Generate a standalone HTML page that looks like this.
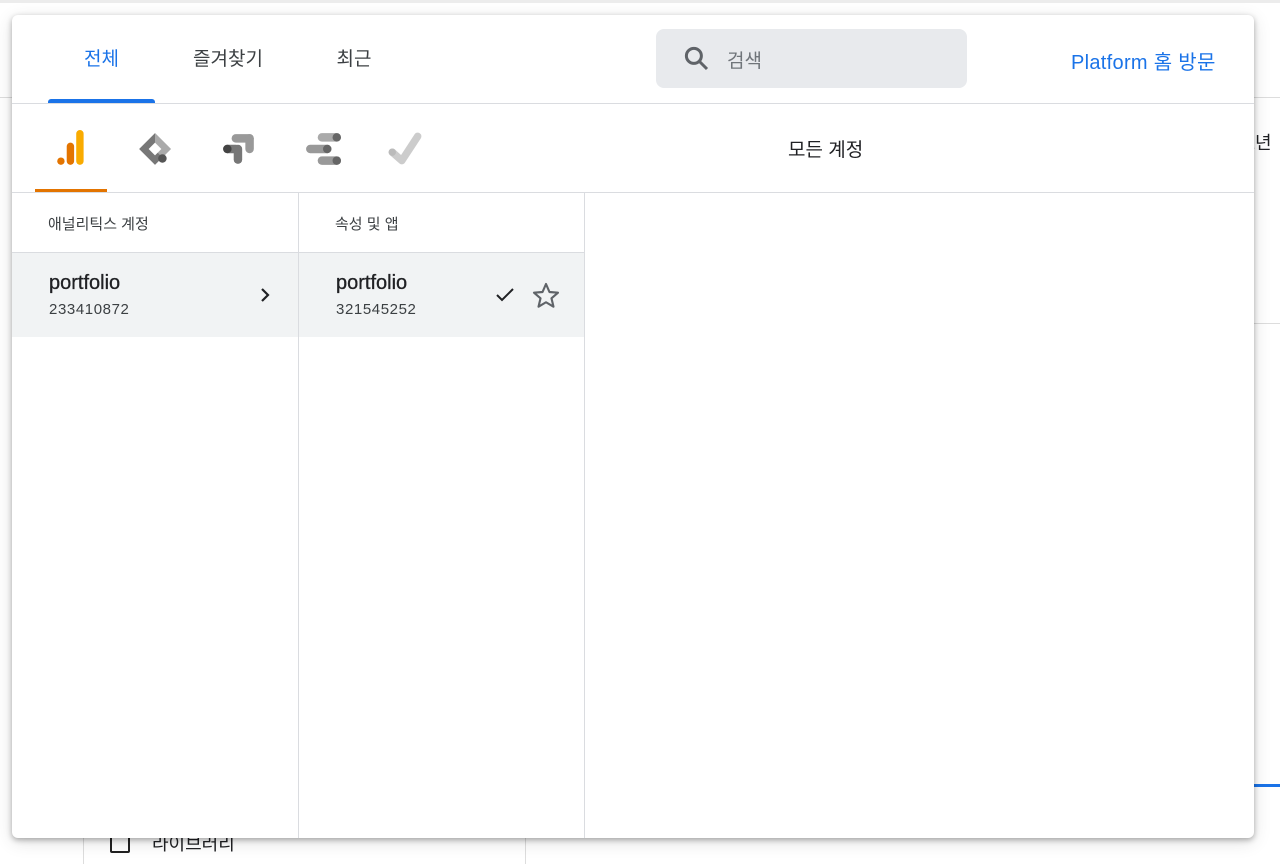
<!DOCTYPE html>
<html><head><meta charset="utf-8"><style>
*{box-sizing:border-box;margin:0;padding:0}
body{width:1280px;height:864px;overflow:hidden;background:#fff;position:relative;font-family:"Liberation Sans","Noto Sans CJK KR",sans-serif;color:#202124}
.bg{position:absolute}
.modal{position:absolute;left:12px;top:15px;width:1242px;height:823px;background:#fff;border-radius:6px;box-shadow:0 2px 6px rgba(0,0,0,.3),0 4px 18px rgba(0,0,0,.12);overflow:hidden}
.tab{position:absolute;top:0;height:88px;line-height:90px;font-size:19px;color:#3c4043;text-align:center}
.sel{color:#1a73e8}
.line{position:absolute;background:#dadce0}
.t{position:absolute;white-space:nowrap}
</style></head><body>
<div class="bg" style="left:0;top:0;width:1280px;height:3px;background:#ececec"></div>
<div class="bg" style="left:0;top:97px;width:1280px;height:1px;background:#ddd"></div>
<div class="bg" style="left:1240px;top:323px;width:40px;height:1px;background:#ddd"></div>
<div class="bg" style="left:1240px;top:784px;width:40px;height:3px;background:#1a73e8"></div>
<div class="bg" style="left:83px;top:838px;width:1px;height:26px;background:#ddd"></div>
<div class="bg" style="left:525px;top:838px;width:1px;height:26px;background:#ddd"></div>
<div class="bg" style="left:110px;top:833px;width:20px;height:20px;border:2px solid #222;border-radius:2px"></div>
<div class="t" style="left:152px;top:830px;font-size:18px">라이브러리</div>
<div class="t" style="left:1245px;top:129px;font-size:18px">2년</div>

<div class="modal">
 <div class="tab sel" style="left:36px;width:107px">전체</div>
 <div style="position:absolute;left:36px;top:84px;width:107px;height:4px;background:#1a73e8;border-radius:3px 3px 0 0"></div>
 <div class="tab" style="left:170px;width:92px">즐겨찾기</div>
 <div class="tab" style="left:300px;width:84px">최근</div>
 <div style="position:absolute;left:644px;top:14px;width:311px;height:59px;background:#e8eaed;border-radius:8px">
  <svg style="position:absolute;left:26px;top:15px" width="30" height="30" viewBox="0 0 24 24"><circle cx="9.5" cy="9.5" r="6" fill="none" stroke="#5f6368" stroke-width="2.4"/><path d="M14 14l6 6" stroke="#5f6368" stroke-width="2.4"/></svg>
  <div class="t" style="left:71px;top:17px;font-size:19px;color:#70757a">검색</div>
 </div>
 <div class="t" style="left:1059px;top:31px;font-size:20px;color:#1a73e8;letter-spacing:.3px">Platform 홈 방문</div>
 <div class="line" style="left:0;top:88px;width:1242px;height:1px"></div>
 <svg style="position:absolute;left:42px;top:115px" width="36" height="38" viewBox="0 0 32 36"><rect x="20" y="0" width="7" height="33" rx="3.5" fill="#f9ab00"/><rect x="11" y="12" width="7" height="21" rx="3.5" fill="#e37400"/><circle cx="5.5" cy="29.5" r="3.5" fill="#e37400"/></svg>
 <svg style="position:absolute;left:125px;top:116px" width="36" height="36" viewBox="0 0 34 34"><path d="M17 2L32 17L17 32L2 17Z" fill="#777"/><path d="M17 2L32 17L24 25L17 18Z" fill="#aaa"/><path d="M17 11L23 17L17 23L11 17Z" fill="#fff"/><circle cx="24" cy="26" r="4" fill="#555"/></svg>
 <svg style="position:absolute;left:209px;top:116px" width="36" height="36" viewBox="0 0 34 34"><rect x="10" y="3" width="21" height="8" rx="4" fill="#999"/><rect x="23" y="3" width="8" height="18" rx="4" fill="#999"/><rect x="2" y="13" width="16" height="8" rx="4" fill="#777"/><rect x="12" y="13" width="8" height="18" rx="4" fill="#777"/><circle cx="6" cy="17" r="4" fill="#444"/></svg>
 <svg style="position:absolute;left:293px;top:116px" width="36" height="36" viewBox="0 0 34 34"><rect x="12" y="2" width="22" height="8" rx="4" fill="#aaa"/><circle cx="30" cy="6" r="4" fill="#666"/><rect x="1" y="13" width="24" height="8" rx="4" fill="#999"/><circle cx="21" cy="17" r="4" fill="#666"/><rect x="12" y="24" width="22" height="8" rx="4" fill="#999"/><circle cx="30" cy="28" r="4" fill="#666"/></svg>
 <svg style="position:absolute;left:375px;top:116px" width="36" height="36" viewBox="0 0 34 34"><path d="M5 20L14 28L29 5" fill="none" stroke="#ccc" stroke-width="7" stroke-linecap="round" stroke-linejoin="round"/><circle cx="5" cy="20" r="3.5" fill="#bbb"/></svg>
 <div style="position:absolute;left:23px;top:174px;width:72px;height:4px;background:#e37400"></div>
 <div class="t" style="left:776px;top:120px;font-size:19px">모든 계정</div>
 <div class="line" style="left:0;top:177px;width:1242px;height:1px"></div>
 <div class="line" style="left:286px;top:178px;width:1px;height:645px"></div>
 <div class="line" style="left:572px;top:178px;width:1px;height:645px"></div>
 <div class="t" style="left:36px;top:198px;font-size:15px;color:#3c4043">애널리틱스 계정</div>
 <div class="t" style="left:323px;top:198px;font-size:15px;color:#3c4043">속성 및 앱</div>
 <div class="line" style="left:0;top:237px;width:572px;height:1px"></div>
 <div style="position:absolute;left:0;top:238px;width:286px;height:84px;background:#f1f3f4"></div>
 <div style="position:absolute;left:287px;top:238px;width:285px;height:84px;background:#f1f3f4"></div>
 <div class="t" style="left:37px;top:257px;font-size:20px;font-weight:500;-webkit-text-stroke:.3px #202124">portfolio</div>
 <div class="t" style="left:37px;top:286px;font-size:15px;color:#3c4043;letter-spacing:.6px">233410872</div>
 <svg style="position:absolute;left:246px;top:272px" width="14" height="16" viewBox="0 0 14 16"><path d="M4 2l6 6-6 6" fill="none" stroke="#202124" stroke-width="2.2"/></svg>
 <div class="t" style="left:324px;top:257px;font-size:20px;-webkit-text-stroke:.3px #202124">portfolio</div>
 <div class="t" style="left:324px;top:286px;font-size:15px;color:#3c4043;letter-spacing:.6px">321545252</div>
 <svg style="position:absolute;left:482px;top:270px" width="22" height="20" viewBox="0 0 22 20"><path d="M3 10l5 5 11-11" fill="none" stroke="#202124" stroke-width="2"/></svg>
 <svg style="position:absolute;left:518px;top:265px" width="32" height="32" viewBox="0 0 24 24"><path d="M12 3l2.6 6 6.4.5-4.9 4.2 1.5 6.3L12 16.7 6.4 20l1.5-6.3L3 9.5 9.4 9z" fill="none" stroke="#5f6368" stroke-width="1.6" stroke-linejoin="round"/></svg>
</div>
</body></html>
